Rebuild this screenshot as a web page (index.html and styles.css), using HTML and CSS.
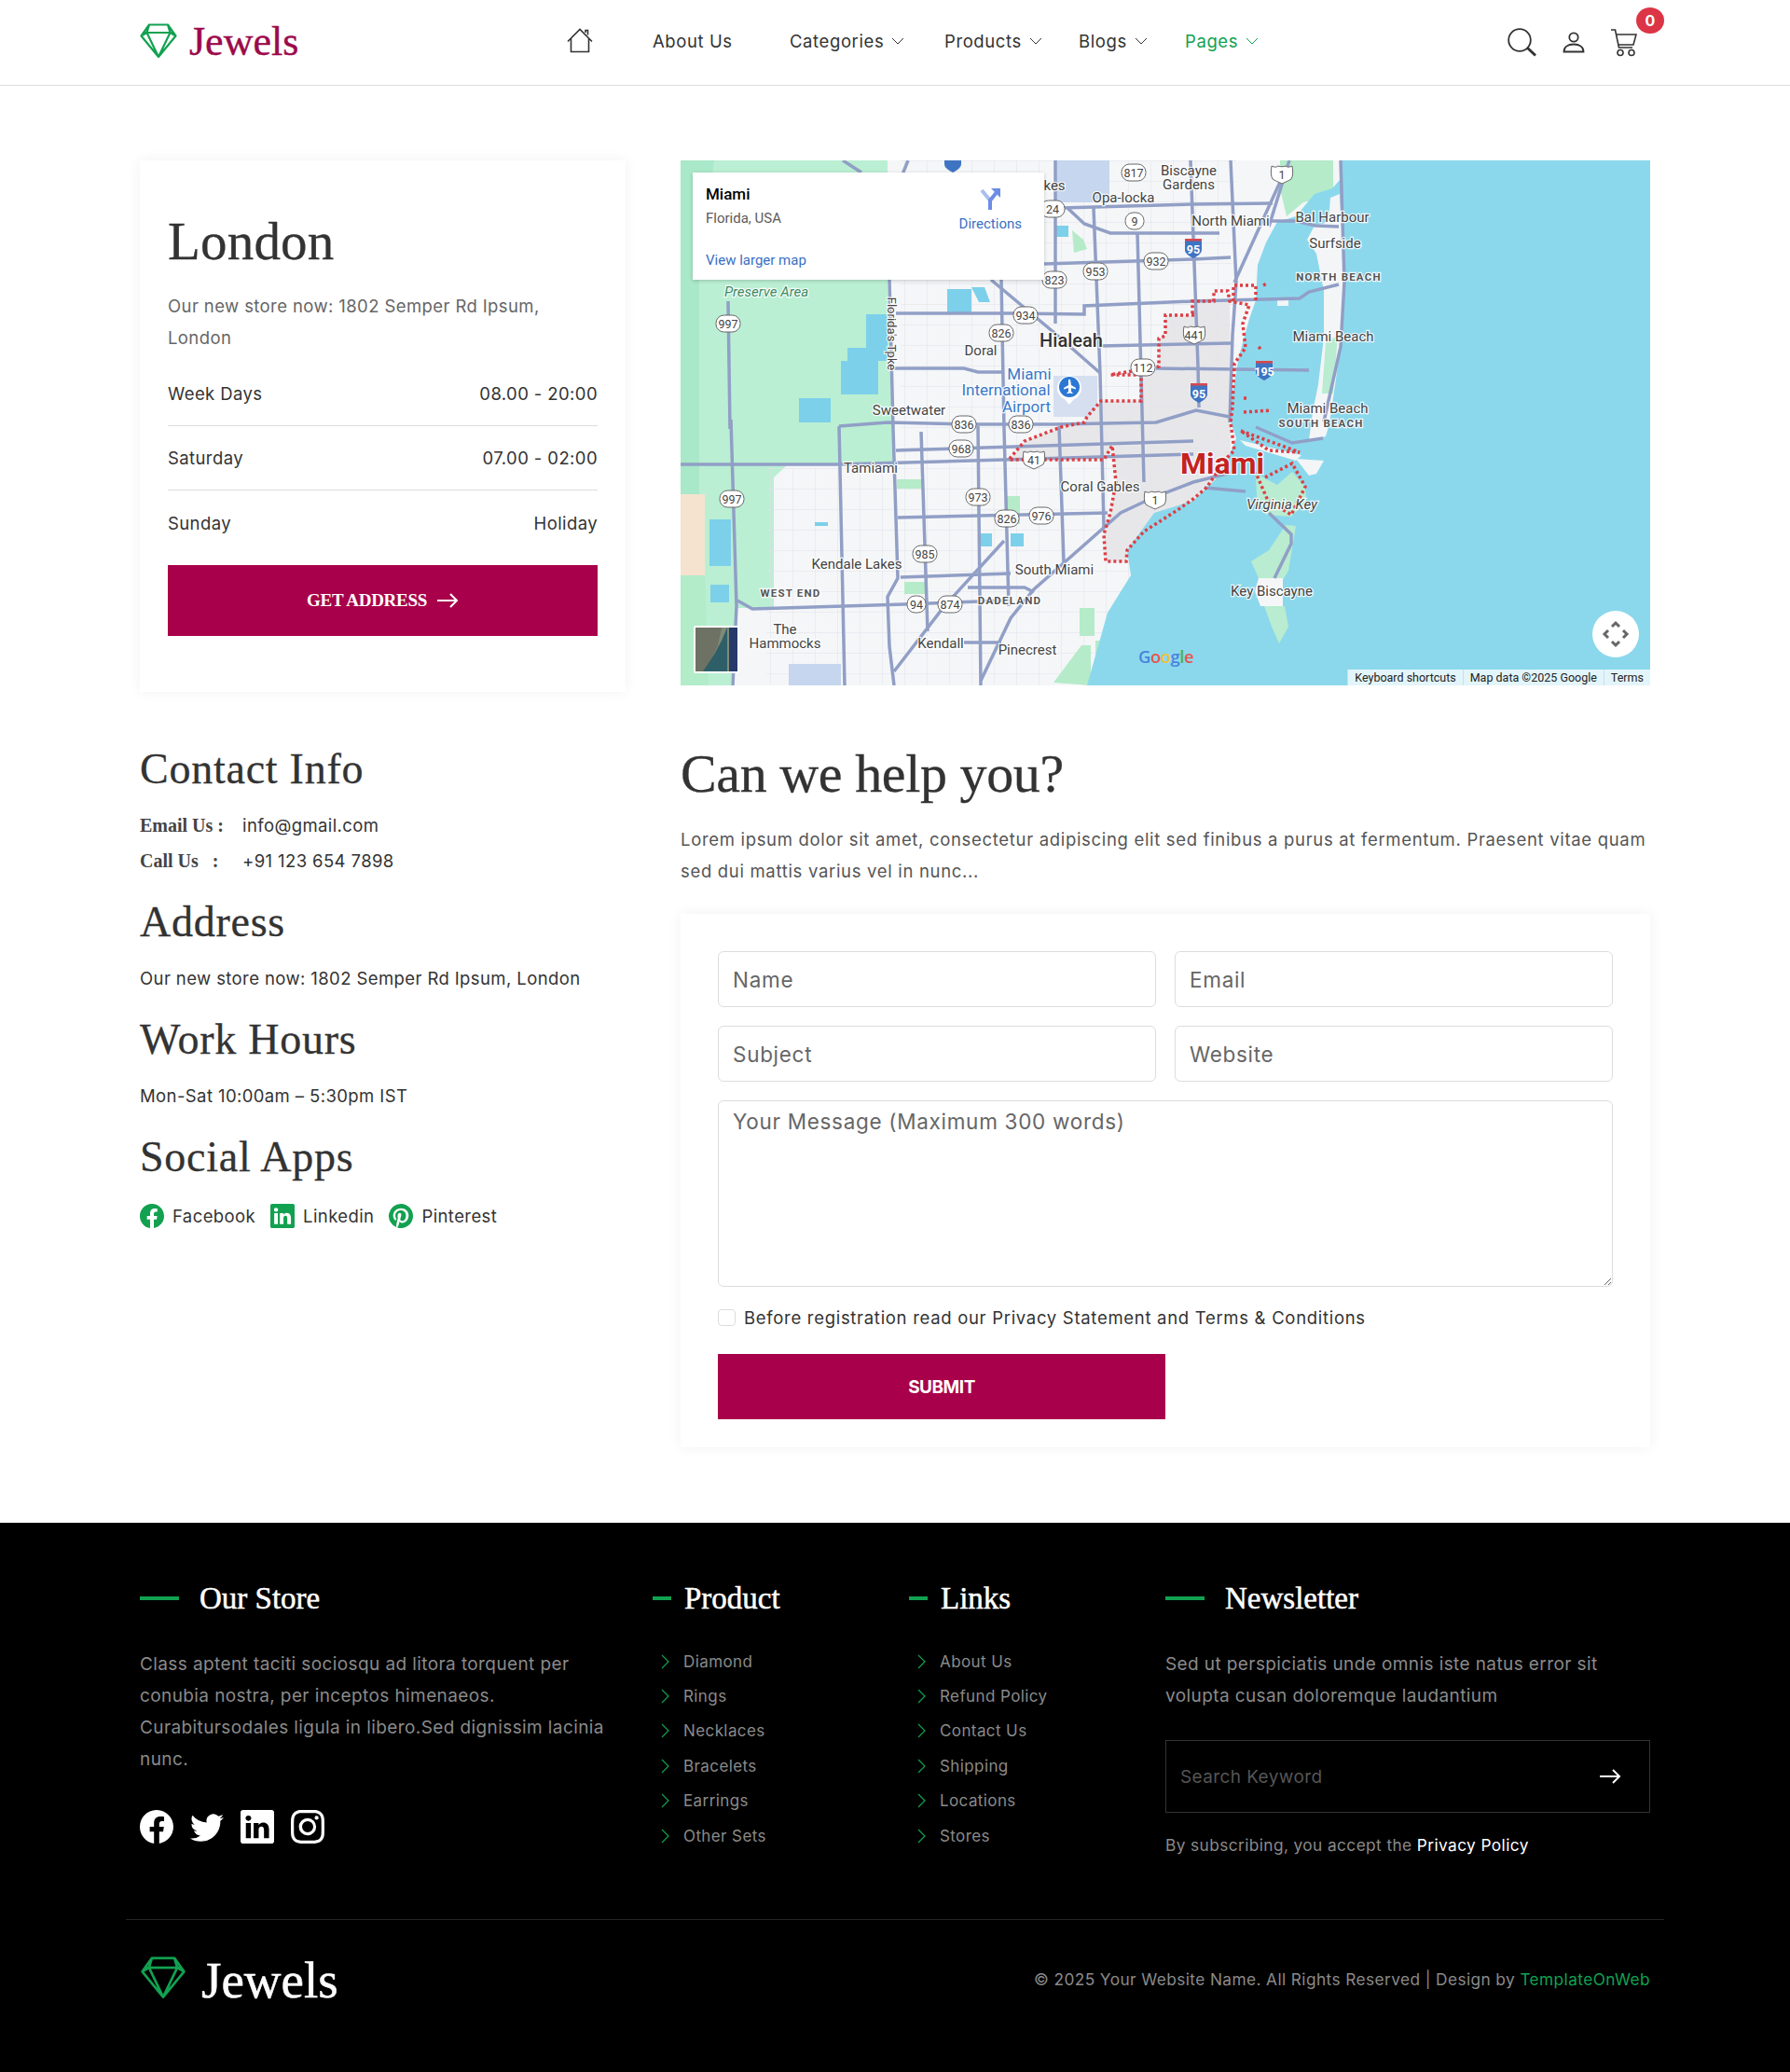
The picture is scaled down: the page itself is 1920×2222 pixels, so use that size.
FILE: index.html
```html
<!DOCTYPE html>
<html lang="en">
<head>
  <meta charset="UTF-8">
  <meta name="viewport" content="width=device-width, initial-scale=1">
  <title>Contact | Jewels</title>
  <link rel="stylesheet" href="styles.css">
</head>
<body>
  <!-- icon sprite -->
  <svg class="sprite" aria-hidden="true">
    <symbol id="gem" viewBox="0 0 40 38">
      <path d="M10 1.5h20l8.5 12L20 36 1.5 13.500zM4.500 10h31M10 1.500L7.500 10l12.500 26L32.500 10 30 1.500M7.500 10l-6 3.500M32.500 10l6 3.500" fill="none" stroke="currentColor" stroke-width="2.200" stroke-linejoin="round"/>
    </symbol>
    <symbol id="chev" viewBox="0 0 14 8"><path d="M1 1l6 6 6-6" fill="none" stroke="currentColor" stroke-width="1"/></symbol>
    <symbol id="chev-r" viewBox="0 0 9 16"><path d="M1 1l7 7-7 7" fill="none" stroke="currentColor" stroke-width="1.200"/></symbol>
    <symbol id="arrow" viewBox="0 0 24 16"><path d="M1 8h21M15 1l7 7-7 7" fill="none" stroke="currentColor" stroke-width="2"/></symbol>
    <symbol id="facebook" viewBox="0 0 16 16"><path fill="currentColor" d="M16 8.049c0-4.446-3.582-8.05-8-8.05C3.58 0-.002 3.603-.002 8.05c0 4.017 2.926 7.347 6.75 7.951v-5.625h-2.03V8.05H6.75V6.275c0-2.017 1.195-3.131 3.022-3.131.876 0 1.791.157 1.791.157v1.98h-1.009c-.993 0-1.303.621-1.303 1.258v1.51h2.218l-.354 2.326H9.25V16c3.824-.604 6.75-3.934 6.75-7.951z"/></symbol>
    <symbol id="twitter" viewBox="0 0 16 16"><path fill="currentColor" d="M5.026 15c6.038 0 9.341-5.003 9.341-9.334 0-.14 0-.282-.006-.422A6.685 6.685 0 0 0 16 3.542a6.658 6.658 0 0 1-1.889.518 3.301 3.301 0 0 0 1.447-1.817 6.533 6.533 0 0 1-2.087.793A3.286 3.286 0 0 0 7.875 6.030a9.325 9.325 0 0 1-6.767-3.429 3.289 3.289 0 0 0 1.018 4.382A3.323 3.323 0 0 1 .64 6.575v.045a3.288 3.288 0 0 0 2.632 3.218 3.203 3.203 0 0 1-.865.115 3.230 3.230 0 0 1-.614-.057 3.283 3.283 0 0 0 3.067 2.277A6.588 6.588 0 0 1 .78 13.580a6.320 6.320 0 0 1-.78-.045A9.344 9.344 0 0 0 5.026 15z"/></symbol>
    <symbol id="linkedin" viewBox="0 0 16 16"><path fill="currentColor" d="M0 1.146C0 .513.526 0 1.175 0h13.650C15.474 0 16 .513 16 1.146v13.708c0 .633-.526 1.146-1.175 1.146H1.175C.526 16 0 15.487 0 14.854V1.146zm4.943 12.248V6.169H2.542v7.225h2.401zm-1.200-8.212c.837 0 1.358-.554 1.358-1.248-.015-.709-.52-1.248-1.342-1.248-.822 0-1.359.54-1.359 1.248 0 .694.521 1.248 1.327 1.248h.016zm4.908 8.212V9.359c0-.216.016-.432.08-.586.173-.431.568-.878 1.232-.878.869 0 1.216.662 1.216 1.634v3.865h2.401V9.250c0-2.220-1.184-3.252-2.764-3.252-1.274 0-1.845.7-2.165 1.193v.025h-.016a5.540 5.540 0 0 1 .016-.025V6.169h-2.400c.03.678 0 7.225 0 7.225h2.400z"/></symbol>
    <symbol id="instagram" viewBox="0 0 16 16"><path fill="currentColor" d="M8 0C5.829 0 5.556.01 4.703.048 3.850.088 3.269.222 2.760.42a3.917 3.917 0 0 0-1.417.923A3.927 3.927 0 0 0 .42 2.760C.222 3.268.087 3.850.048 4.700.01 5.555 0 5.827 0 8.001c0 2.172.01 2.444.048 3.297.04.852.174 1.433.372 1.942.205.526.478.972.923 1.417.444.445.89.719 1.416.923.51.198 1.090.333 1.942.372C5.555 15.990 5.827 16 8 16s2.444-.01 3.298-.048c.851-.04 1.434-.174 1.943-.372a3.916 3.916 0 0 0 1.416-.923c.445-.445.718-.891.923-1.417.197-.509.332-1.090.372-1.942C15.990 10.445 16 10.173 16 8s-.01-2.445-.048-3.299c-.04-.851-.175-1.433-.372-1.941a3.926 3.926 0 0 0-.923-1.417A3.911 3.911 0 0 0 13.240.42c-.51-.198-1.092-.333-1.943-.372C10.443.01 10.172 0 7.998 0h.003zm-.717 1.442h.718c2.136 0 2.389.007 3.232.046.78.035 1.204.166 1.486.275.373.145.64.319.92.599.28.28.453.546.598.92.11.281.24.705.275 1.485.039.843.047 1.096.047 3.231s-.008 2.389-.047 3.232c-.035.78-.166 1.203-.275 1.485a2.470 2.470 0 0 1-.599.919c-.28.28-.546.453-.92.598-.28.11-.704.24-1.485.276-.843.038-1.096.047-3.232.047s-2.390-.009-3.233-.047c-.78-.036-1.203-.166-1.485-.276a2.478 2.478 0 0 1-.92-.598 2.480 2.480 0 0 1-.6-.92c-.109-.281-.24-.705-.275-1.485-.038-.843-.046-1.096-.046-3.233 0-2.136.008-2.388.046-3.231.036-.78.166-1.204.276-1.486.145-.373.319-.64.599-.92.28-.28.546-.453.92-.598.282-.11.705-.24 1.485-.276.738-.034 1.024-.044 2.515-.045v.002zm4.988 1.328a.96.96 0 1 0 0 1.920.96.96 0 0 0 0-1.920zm-4.270 1.122a4.109 4.109 0 1 0 0 8.217 4.109 4.109 0 0 0 0-8.217zm0 1.441a2.667 2.667 0 1 1 0 5.334 2.667 2.667 0 0 1 0-5.334z"/></symbol>
    <symbol id="pinterest" viewBox="0 0 16 16"><path fill="currentColor" d="M8 0a8 8 0 0 0-2.915 15.452c-.07-.633-.134-1.606.027-2.297.146-.625.938-3.977.938-3.977s-.239-.479-.239-1.187c0-1.113.645-1.943 1.448-1.943.682 0 1.012.512 1.012 1.127 0 .686-.437 1.712-.663 2.663-.188.796.4 1.446 1.185 1.446 1.422 0 2.515-1.500 2.515-3.664 0-1.915-1.377-3.254-3.342-3.254-2.276 0-3.612 1.707-3.612 3.471 0 .688.265 1.425.595 1.826a.24.24 0 0 1 .056.23c-.061.252-.196.796-.222.907-.035.146-.116.177-.268.107-1-.465-1.624-1.926-1.624-3.100 0-2.523 1.834-4.840 5.286-4.840 2.775 0 4.932 1.977 4.932 4.620 0 2.757-1.739 4.976-4.151 4.976-.811 0-1.573-.421-1.834-.919l-.498 1.902c-.181.695-.669 1.566-.995 2.097A8 8 0 1 0 8 0z"/></symbol>
  </svg>

  <header class="header">
    <div class="container header-row">
      <a class="logo" href="#">
        <svg class="logo-gem"><use href="#gem"/></svg>
        <span>Jewels</span>
      </a>
      <nav class="nav">
        <a class="nav-home" href="#" aria-label="Home">
          <svg viewBox="0 0 28 27" width="28" height="27"><path d="M1 14.500L14 1.500l13 13M4.500 11v14.500h19V11M20 5V2.500h2.500v5" fill="none" stroke="#333" stroke-width="1.600"/></svg>
        </a>
        <a class="nav-link" href="#">About Us</a>
        <a class="nav-link" href="#">Categories <svg class="chev"><use href="#chev"/></svg></a>
        <a class="nav-link" href="#">Products <svg class="chev"><use href="#chev"/></svg></a>
        <a class="nav-link" href="#">Blogs <svg class="chev"><use href="#chev"/></svg></a>
        <a class="nav-link nav-active" href="#">Pages <svg class="chev"><use href="#chev"/></svg></a>
      </nav>
      <div class="header-icons">
        <svg viewBox="0 0 32 31" width="32" height="31"><circle cx="13" cy="13" r="11.800" fill="none" stroke="#333" stroke-width="1.800"/><path d="M21.500 21.500L30 29.500" stroke="#333" stroke-width="3"/></svg>
        <svg viewBox="0 0 24 23" width="24" height="23"><circle cx="12" cy="6" r="4.700" fill="none" stroke="#333" stroke-width="1.800"/><path d="M1.500 21.500c0-5 4-8 10.500-8s10.500 3 10.500 8z" fill="none" stroke="#333" stroke-width="1.800"/></svg>
        <a class="cart" href="#">
          <svg viewBox="0 0 29 30" width="29" height="30"><path d="M1 1h4.500l4 19h14.500M6.500 6H28l-3 11H9" fill="none" stroke="#333" stroke-width="1.600"/><circle cx="11" cy="25.500" r="3" fill="none" stroke="#333" stroke-width="1.600"/><circle cx="23" cy="25.500" r="3" fill="none" stroke="#333" stroke-width="1.600"/></svg>
          <span class="cart-badge">0</span>
        </a>
      </div>
    </div>
  </header>

  <main class="container main">
    <section class="top-grid">
      <div class="card store-card">
        <h2>London</h2>
        <p class="store-addr">Our new store now: 1802 Semper Rd Ipsum, London</p>
        <ul class="hours">
          <li><span>Week Days</span><span>08.00 - 20:00</span></li>
          <li><span>Saturday</span><span>07.00 - 02:00</span></li>
          <li><span>Sunday</span><span>Holiday</span></li>
        </ul>
        <a class="btn btn-address" href="#">GET ADDRESS <svg class="btn-arrow"><use href="#arrow"/></svg></a>
      </div>

      <div class="map">
        <svg class="map-svg" viewBox="0 0 1040 563">
          <defs>
            <rect id="sh" x="-13" y="-9" width="26" height="18" rx="8.500" class="sh"/>
            <rect id="sh2" x="-10" y="-9" width="20" height="18" rx="8.500" class="sh"/>
            <path id="us" class="sh" d="M-11-9c3 1.500 5 1.500 7 0 3 1 5 1 8 0 2 1.500 4 1.500 7 0 1 5 1 11-1 14-3 2-6 3-10 5-4-2-7-3-10-5-2-3-2-9-1-14z"/>
            <g id="ih"><path d="M-9-8h18v10c0 4-5 7-9 9-4-2-9-5-9-9z" fill="#3f74c2"/><path d="M-9-10h18v2.500h-18z" fill="#d9484e"/></g>
            <pattern id="grid" width="24" height="22" patternUnits="userSpaceOnUse"><path d="M0 0h24M0 0v22" stroke="#dfe2ea" stroke-width="1"/></pattern>
          </defs>

          <rect width="1040" height="563" fill="#f5f6f8"/>
          <!-- everglades -->
          <path fill="#baefd3" d="M0 0H222V128L228 326H115L100 340V480L60 480 54 563H0z"/>
          <path fill="#a9e8c8" d="M0 0H36L20 120V358H0z"/>
          <path fill="#f5e3cf" d="M0 358H26L26 445H0z"/>
          <path fill="#b2ecc9" d="M0 445H26L30 563H0z"/>
          <!-- minor street grid -->
          <rect x="236" y="0" width="360" height="563" fill="url(#grid)"/>
          <rect x="92" y="330" width="144" height="233" fill="url(#grid)"/>
          <path fill="#c5d6ee" d="M116 540H172V563H116z"/>
          <path fill="#c5d6ee" d="M402 0H460V45H402z"/>
          <path fill="#d5dff0" d="M400 231H447V275H400z"/>
          <!-- lakes -->
          <g fill="#7dd0ea">
            <path d="M286 138H312V163H286zM312 136h14l6 16h-12zM199 165h23v36h-23zM179 201h43v14h-43zM172 215h40v36h-40zM127 255h34v26h-34zM31 385H54V435H31zM32 455H52V474H32zM144 388h14v4h-14zM322 400h12v14h-12zM354 400h14v14h-14zM402 70h14v12h-14z"/>
          </g>
          <!-- parks -->
          <g fill="#b5ebc9">
            <path d="M643 0H700V38L668 45 650 60 643 30zM232 342H258V352H232zM240 452H262V465H240zM428 480h16v30h-16zM400 560l30-40h10v43zM445 515h12v30h-12zM350 360h14v30h-14zM420 75l12 10 4 10-14 4z"/>
          </g>
          <!-- urban grey -->
          <path fill="#e7e7ea" d="M551 151L549 166H520V188L513 191V221L461 230H494V258H451L433 281 408 286 369 301 352 321H454L463 306 467 345 461 378 454 401 456 430H478L497 398 533 375 590 340 589 151z"/>
          <rect x="450" y="150" width="145" height="210" fill="url(#grid)" opacity=".6"/>

          <!-- water -->
          <path fill="#8bd8ec" d="M708 0H1040V563H436L458 485 483 445 479 418 508 378 550 365 574 342 587 320 596 298 590 280 592 250 599 210 610 170 617 150 619 112 628 88 640 66 660 60 680 36 699 30 708 20z"/>
          <!-- barrier islands -->
          <path fill="#f3f5f7" d="M697 40L707 36 712 130 708 200 696 282 692 296 674 300 678 270 684 240 690 190 690 140 682 100 672 85 680 70 695 66z"/>
          <path fill="#b9ecd0" d="M692 195L705 188 700 250 688 250z"/>
          <path fill="#f3f5f7" d="M660 320L690 322 682 336 674 338zM640 150h12v6h-12zM600 300L666 316 660 322 606 306z"/>
          <path fill="#b9ecd0" d="M617 336L640 348 656 334 670 350 671 366 655 382 628 380 618 360zM649 391L660 392 652 440 646 450 620 448 612 430 631 418zM626 478H648L652 500 642 518 634 500z"/>
          <path fill="#f5f6f8" d="M620 448H646V478H622L616 462z"/>

          <!-- main roads -->
          <g class="road">
            <path d="M51 151L53 288 54 278 60 478 56 563"/>
            <path d="M170 285L176 563"/>
            <path d="M224 128L228 288 233 448 222 468 224 521 229 563"/>
            <path d="M258 291L265 505"/>
            <path d="M319 285L322 563"/>
            <path d="M344 128L347 288 352 478"/>
            <path d="M402 0V175"/>
            <path d="M406 285L411 431"/>
            <path d="M443 51L450 228 454 393"/>
            <path d="M490 78L497 345"/>
            <path d="M547 0L555 221 556 265"/>
            <path d="M590 0L596 131 592 188 589 281"/>
            <path d="M644 21L594 131"/>
            <path d="M653 0L631 71"/>
            <path d="M174 0L194 13M244 0L236 20"/>
            <path d="M333 128L401 185 450 228"/>
            <path d="M408 51L550 47 635 46"/>
            <path d="M390 111L550 106 590 104"/>
            <path d="M415 51L433 68 461 78H578"/>
            <path d="M231 164H358L433 165V156L550 151"/>
            <path d="M229 223H304L319 227H347"/>
            <path d="M450 199L592 196"/>
            <path d="M170 285L222 281 304 283H400L510 281 553 268 589 275"/>
            <path d="M510 223L674 225"/>
            <path d="M549 151L664 148 674 141 706 133"/>
            <path d="M631 65H660L681 70 706 71"/>
            <path d="M0 326H169L347 321 550 315"/>
            <path d="M231 311L550 301"/>
            <path d="M233 383L458 378"/>
            <path d="M229 548L283 478 347 408"/>
            <path d="M322 558L354 491 379 460 472 378 508 361 550 345 590 335"/>
            <path d="M236 447L354 443"/>
            <path d="M308 458H369L379 463"/>
            <path d="M61 472L77 481 240 476 347 472"/>
            <path d="M304 517H344"/>
            <path d="M631 378L655 401V411L637 448"/>
            <path d="M562 351L606 355"/>
            <path d="M617 286L656 303 689 298"/>
            <path d="M708 0L712 130 708 200 690 280"/>
          </g>

          <!-- city boundary -->
          <g class="boundary">
            <path d="M551 166H520V188L513 191V221L461 230H494V258H451L436 275 433 281 408 286 369 301 352 321H454L463 306 467 345 461 378 454 401 456 430H478L479 418 497 398 533 375 550 363 564 351 587 318 594 311 590 281 592 265 594 218 606 201 603 175 610 155 589 151 587 140H572V151H549V166"/>
            <path d="M593 151V134H617V151M601 290L664 313 631 311 601 290M627 340L656 325 670 350 655 380 630 365 617 335"/>
            <path d="M625 134l4-2M620 200l4 4M618 220l2-2M604 255h3M604 270l30-2"/>
          </g>

          <!-- labels -->
          <g class="lbl">
            <text class="lbl-park" x="92" y="141">Preserve Area</text>
            <text class="lbl-sm" transform="translate(226 186) rotate(90)">Florida's Tpke</text>
            <text x="322" y="204">Doral</text>
            <text class="lbl-bold" x="419" y="193">Hialeah</text>
            <text x="475" y="40">Opa-locka</text>
            <text x="401" y="27">kes</text>
            <text x="545" y="11">Biscayne</text>
            <text x="545" y="26">Gardens</text>
            <text x="590" y="65">North Miami</text>
            <text x="699" y="61">Bal Harbour</text>
            <text x="702" y="89">Surfside</text>
            <text class="lbl-area" x="706" y="125">NORTH BEACH</text>
            <text x="700" y="189">Miami Beach</text>
            <text x="694" y="266">Miami Beach</text>
            <text class="lbl-area" x="687" y="282">SOUTH BEACH</text>
            <text class="lbl-air" x="374" y="229">Miami</text>
            <text class="lbl-air" x="349" y="246">International</text>
            <text class="lbl-air" x="371" y="264">Airport</text>
            <text x="245" y="268">Sweetwater</text>
            <text x="204" y="330">Tamiami</text>
            <text x="450" y="350">Coral Gables</text>
            <text x="189" y="433">Kendale Lakes</text>
            <text x="401" y="439">South Miami</text>
            <text class="lbl-area" x="118" y="464">WEST END</text>
            <text class="lbl-area" x="353" y="472">DADELAND</text>
            <text x="112" y="503">The</text>
            <text x="112" y="518">Hammocks</text>
            <text x="279" y="518">Kendall</text>
            <text x="372" y="525">Pinecrest</text>
            <text class="lbl-city" x="581" y="325">Miami</text>
            <text class="lbl-it" x="645" y="369">Virginia Key</text>
            <text x="634" y="462">Key Biscayne</text>
          </g>

          <!-- airport pin -->
          <circle cx="417" cy="244" r="13" fill="#fff"/>
          <path d="M412 256l5 6 5-6z" fill="#fff"/>
          <circle cx="417" cy="243" r="11" fill="#2b78d4"/>
          <path d="M416 235h2l1 6 5 3v1.500l-5-1.500v4l1.500 1.200v1l-3-.7-3 .7v-1l1.500-1.200v-4l-5 1.500V244l5-3z" fill="#fff"/>

          <!-- route shields -->
          <g>
            <use href="#sh" x="51" y="175"/><use href="#sh" x="370" y="166"/><use href="#sh" x="344" y="185"/><use href="#sh" x="401" y="128"/><use href="#sh" x="445" y="119"/><use href="#sh" x="510" y="108"/><use href="#sh" x="486" y="13"/><use href="#sh2" x="487" y="65"/><use href="#sh" x="399" y="52"/><use href="#sh" x="496" y="222"/><use href="#sh" x="304" y="283"/><use href="#sh" x="365" y="283"/><use href="#sh" x="301" y="309"/><use href="#sh" x="55" y="363"/><use href="#sh" x="319" y="361"/><use href="#sh" x="350" y="384"/><use href="#sh" x="387" y="381"/><use href="#sh" x="262" y="422"/><use href="#sh2" x="253" y="476"/><use href="#sh" x="289" y="476"/>
            <use href="#us" x="645" y="15"/><use href="#us" x="551" y="187"/><use href="#us" x="379" y="321"/><use href="#us" x="509" y="364"/>
            <use href="#ih" x="550" y="94"/><use href="#ih" x="626" y="225"/><use href="#ih" x="556" y="249"/><use href="#ih" x="292" y="2"/>
          </g>
          <g class="rtn">
            <text x="51" y="175">997</text><text x="370" y="166">934</text><text x="344" y="185">826</text><text x="401" y="128">823</text><text x="445" y="119">953</text><text x="510" y="108">932</text><text x="486" y="13">817</text><text x="487" y="65">9</text><text x="399" y="52">24</text><text x="496" y="222">112</text><text x="304" y="283">836</text><text x="365" y="283">836</text><text x="301" y="309">968</text><text x="55" y="363">997</text><text x="319" y="361">973</text><text x="350" y="384">826</text><text x="387" y="381">976</text><text x="262" y="422">985</text><text x="253" y="476">94</text><text x="289" y="476">874</text>
            <text x="645" y="15">1</text><text x="551" y="187">441</text><text x="379" y="321">41</text><text x="509" y="364">1</text>
          </g>
          <g class="rtn rtn-i">
            <text x="550" y="95">95</text><text x="626" y="226">195</text><text x="556" y="250">95</text>
          </g>

          <!-- satellite tile -->
          <rect x="14" y="499" width="49" height="51" rx="2" fill="#fff"/>
          <rect x="16" y="501" width="45" height="47" fill="#7f8a78"/>
          <path d="M16 501H44L40 520 28 548H16z" fill="#6d7264"/>
          <path d="M24 548L36 530 44 515 50 501V548z" fill="#2e5f68"/>
          <rect x="52" y="501" width="9" height="47" fill="#27386a"/>

          <text class="map-google" x="491" y="539"><tspan fill="#4a84e0">G</tspan><tspan fill="#e3584d">o</tspan><tspan fill="#f0c23c">o</tspan><tspan fill="#4a84e0">g</tspan><tspan fill="#4caf5b">l</tspan><tspan fill="#e3584d">e</tspan></text>
        </svg>

        <div class="map-pop">
          <div class="map-pop-head">
            <div>
              <strong>Miami</strong>
              <span>Florida, USA</span>
            </div>
            <a class="map-dir" href="#">
              <svg viewBox="0 0 24 24" width="24" height="24"><path d="M12 24V14L3 3" fill="none" stroke="#a9bdf0" stroke-width="4"/><path d="M12 24V14L20 4" fill="none" stroke="#6c8de6" stroke-width="4"/><path d="M13 1h10v10z" fill="#6c8de6"/></svg>
              Directions
            </a>
          </div>
          <a class="map-larger" href="#">View larger map</a>
        </div>
        <button class="map-full" aria-label="Fullscreen">
          <svg viewBox="0 0 30 30" width="30" height="30"><path d="M11 7l4-4 4 4M11 23l4 4 4-4M7 11l-4 4 4 4M23 11l4 4-4 4" fill="none" stroke="#666" stroke-width="3"/></svg>
        </button>
        <div class="map-attr">
          <span>Keyboard shortcuts</span><span>Map data ©2025 Google</span><span>Terms</span>
        </div>
      </div>
    </section>

    <section class="bottom-grid">
      <div class="contact-info">
        <h3>Contact Info</h3>
        <p class="info-line"><b>Email Us :</b> info@gmail.com</p>
        <p class="info-line"><b>Call Us &nbsp; :</b> +91 123 654 7898</p>
        <h3>Address</h3>
        <p>Our new store now: 1802 Semper Rd Ipsum, London</p>
        <h3>Work Hours</h3>
        <p>Mon-Sat 10:00am – 5:30pm IST</p>
        <h3>Social Apps</h3>
        <div class="social">
          <a href="#"><svg><use href="#facebook"/></svg>Facebook</a>
          <a href="#"><svg><use href="#linkedin"/></svg>Linkedin</a>
          <a href="#"><svg><use href="#pinterest"/></svg>Pinterest</a>
        </div>
      </div>

      <div class="help">
        <h2>Can we help you?</h2>
        <p class="help-text">Lorem ipsum dolor sit amet, consectetur adipiscing elit sed finibus a purus at fermentum. Praesent vitae quam sed dui mattis varius vel in nunc...</p>
        <form class="card help-form">
          <div class="form-row">
            <input type="text" placeholder="Name">
            <input type="email" placeholder="Email">
          </div>
          <div class="form-row">
            <input type="text" placeholder="Subject">
            <input type="text" placeholder="Website">
          </div>
          <textarea placeholder="Your Message (Maximum 300 words)"></textarea>
          <label class="agree"><input type="checkbox"> Before registration read our Privacy Statement and Terms &amp; Conditions</label>
          <button type="button" class="btn btn-submit">SUBMIT</button>
        </form>
      </div>
    </section>
  </main>

  <footer class="footer">
    <div class="container">
      <div class="footer-grid">
        <div>
          <h4 class="f-title"><i class="f-dash"></i>Our Store</h4>
          <p class="f-text">Class aptent taciti sociosqu ad litora torquent per conubia nostra, per inceptos himenaeos. Curabitursodales ligula in libero.Sed dignissim lacinia nunc.</p>
          <div class="f-social">
            <svg><use href="#facebook"/></svg>
            <svg><use href="#twitter"/></svg>
            <svg><use href="#linkedin"/></svg>
            <svg><use href="#instagram"/></svg>
          </div>
        </div>
        <div>
          <h4 class="f-title f-title-short"><i class="f-dash"></i>Product</h4>
          <ul class="f-links">
            <li><svg><use href="#chev-r"/></svg>Diamond</li>
            <li><svg><use href="#chev-r"/></svg>Rings</li>
            <li><svg><use href="#chev-r"/></svg>Necklaces</li>
            <li><svg><use href="#chev-r"/></svg>Bracelets</li>
            <li><svg><use href="#chev-r"/></svg>Earrings</li>
            <li><svg><use href="#chev-r"/></svg>Other Sets</li>
          </ul>
        </div>
        <div>
          <h4 class="f-title f-title-short"><i class="f-dash"></i>Links</h4>
          <ul class="f-links">
            <li><svg><use href="#chev-r"/></svg>About Us</li>
            <li><svg><use href="#chev-r"/></svg>Refund Policy</li>
            <li><svg><use href="#chev-r"/></svg>Contact Us</li>
            <li><svg><use href="#chev-r"/></svg>Shipping</li>
            <li><svg><use href="#chev-r"/></svg>Locations</li>
            <li><svg><use href="#chev-r"/></svg>Stores</li>
          </ul>
        </div>
        <div>
          <h4 class="f-title"><i class="f-dash"></i>Newsletter</h4>
          <p class="f-text">Sed ut perspiciatis unde omnis iste natus error sit volupta cusan doloremque laudantium</p>
          <div class="f-search">
            <input type="text" placeholder="Search Keyword">
            <svg><use href="#arrow"/></svg>
          </div>
          <p class="f-note">By subscribing, you accept the <a href="#">Privacy Policy</a></p>
        </div>
      </div>
      <div class="footer-bottom">
        <a class="f-logo" href="#">
          <svg class="f-gem"><use href="#gem"/></svg>
          <span>Jewels</span>
        </a>
        <p>© 2025 Your Website Name. All Rights Reserved | Design by <a href="#">TemplateOnWeb</a></p>
      </div>
    </div>
  </footer>
</body>
</html>
```

FILE: styles.css
```css
:root {
  --wine: #a8004a;
  --green: #12a150;
  --text: #333;
  --muted: #666;
  --body-font: 'Inter', sans-serif;
  --head-font: 'Liberation Serif', serif;
}

* {
  box-sizing: border-box;
  margin: 0;
  padding: 0;
}

body {
  font-family: var(--body-font);
  font-size: 18.5px;
  letter-spacing: 0.4px;
  color: var(--text);
  background: #fff;
}

a {
  color: inherit;
  text-decoration: none;
}

ul {
  list-style: none;
}

.sprite {
  display: none;
}

.container {
  width: 1620px;
  margin: 0 auto;
}

/* header */
.header {
  height: 92px;
  border-bottom: 1px solid #ddd;
}

.header-row {
  height: 91px;
  display: flex;
  align-items: center;
}

.logo {
  width: 458px;
  display: flex;
  align-items: center;
  gap: 13px;
  margin-top: -2px;
  font-family: var(--head-font);
  font-size: 44px;
  letter-spacing: 0;
  color: #9c0a4c;
  -webkit-text-stroke: 0.4px #9c0a4c;
}

.logo-gem {
  width: 40px;
  height: 38px;
  color: var(--green);
  margin-top: -2px;
}

.nav {
  display: grid;
  grid-template-columns: 92px 147px 166px 144px 114px auto;
  align-items: center;
  margin-top: -4px;
  letter-spacing: 0.6px;
}

.nav-home {
  display: flex;
}

.nav-link {
  display: flex;
  align-items: center;
  gap: 8px;
}

.nav-active {
  color: var(--green);
}

.chev {
  width: 14px;
  height: 8px;
}

.header-icons {
  margin-left: auto;
  margin-right: 14px;
  display: flex;
  align-items: center;
  gap: 27px;
}

.cart {
  position: relative;
  display: flex;
}

.cart-badge {
  position: absolute;
  top: -23px;
  left: 28px;
  width: 30px;
  height: 28px;
  border-radius: 50%;
  background: #dc3545;
  color: #fff;
  font-size: 16px;
  font-weight: 700;
  letter-spacing: 0;
  display: flex;
  align-items: center;
  justify-content: center;
}

/* main */
.main {
  padding-top: 80px;
  padding-bottom: 81px;
}

.top-grid,
.bottom-grid {
  display: grid;
  grid-template-columns: 521px 1040px;
  column-gap: 59px;
  align-items: start;
}

.card {
  background: #fff;
  box-shadow: 0 0 14px rgba(0, 0, 0, 0.06);
}

.store-card {
  height: 570px;
  padding: 30px;
}

.store-card h2 {
  font-family: var(--head-font);
  font-size: 57px;
  font-weight: 400;
  line-height: 60px;
  letter-spacing: 0.2px;
  margin: 27px 0 22px;
  -webkit-text-stroke: 0.3px #333;
}

.store-addr {
  line-height: 34px;
  color: var(--muted);
  margin-bottom: 9px;
}

.hours li {
  height: 69px;
  display: flex;
  justify-content: space-between;
  align-items: center;
  border-bottom: 1px solid #ddd;
}

.hours li:last-child {
  border-bottom: none;
}

.btn {
  display: flex;
  align-items: center;
  justify-content: center;
  background: var(--wine);
  color: #fff;
  border: none;
}

.btn-address {
  height: 76px;
  margin-top: 11px;
  gap: 10px;
  font-family: var(--head-font);
  font-size: 19px;
  font-weight: 700;
  letter-spacing: -0.3px;
}

.btn-arrow {
  width: 24px;
  height: 16px;
}

/* map */
.map {
  position: relative;
  height: 563px;
  overflow: hidden;
}

.map-svg {
  display: block;
  width: 100%;
  height: 100%;
}

.road path {
  fill: none;
  stroke: #919fc6;
  stroke-width: 3.500;
}

.boundary path {
  fill: none;
  stroke: #dc3f45;
  stroke-width: 3.500;
  stroke-dasharray: 3 3;
}

.lbl text {
  font-family: 'Roboto', sans-serif;
  font-size: 15px;
  letter-spacing: 0;
  fill: #444;
  text-anchor: middle;
  dominant-baseline: central;
  paint-order: stroke;
  stroke: rgba(255, 255, 255, 0.85);
  stroke-width: 2.500px;
}

.lbl .lbl-bold {
  font-size: 20px;
  font-weight: 500;
  fill: #333;
}

.lbl .lbl-sm {
  font-size: 13px;
}

.lbl .lbl-park {
  font-style: italic;
  fill: #3c8a64;
}

.lbl .lbl-area {
  font-size: 11.500px;
  font-weight: 700;
  letter-spacing: 1.200px;
  fill: #555;
}

.lbl .lbl-air {
  font-size: 17px;
  fill: #3a78c9;
}

.lbl .lbl-city {
  font-size: 32px;
  font-weight: 700;
  fill: #c5221f;
}

.lbl .lbl-it {
  font-style: italic;
}

.sh {
  fill: #fff;
  stroke: #666;
  stroke-width: 1;
}

.rtn text {
  font-family: 'Roboto', sans-serif;
  font-size: 12.500px;
  letter-spacing: 0;
  fill: #444;
  text-anchor: middle;
  dominant-baseline: central;
}

.rtn-i text {
  font-weight: 700;
  fill: #fff;
}

.map-google {
  font-family: 'Open Sans', sans-serif;
  font-size: 18.500px;
  font-weight: 600;
  letter-spacing: -0.5px;
}

.map-pop {
  position: absolute;
  left: 13px;
  top: 13px;
  width: 377px;
  height: 115px;
  padding: 12px 24px 0 14px;
  background: #fff;
  font-family: 'Roboto', sans-serif;
  letter-spacing: 0;
  box-shadow: 0 1px 4px rgba(0, 0, 0, 0.2);
}

.map-pop-head {
  display: flex;
  justify-content: space-between;
  height: 70px;
}

.map-pop strong {
  display: block;
  font-size: 17px;
  font-weight: 500;
  line-height: 22px;
  color: #000;
}

.map-pop span {
  display: block;
  font-size: 15px;
  line-height: 30px;
  color: #5b5b5b;
}

.map-dir,
.map-larger {
  font-size: 15px;
  color: #3a6fc4;
}

.map-dir {
  display: flex;
  flex-direction: column;
  align-items: center;
  line-height: 22px;
  gap: 4px;
  margin-top: 4px;
}

.map-larger {
  display: block;
  margin-top: 3px;
}

.map-full {
  position: absolute;
  left: 978px;
  top: 483px;
  width: 50px;
  height: 50px;
  border: none;
  border-radius: 50%;
  background: #fff;
  display: flex;
  align-items: center;
  justify-content: center;
}

.map-attr {
  position: absolute;
  right: 0;
  bottom: 0;
  height: 17px;
  display: flex;
  background: rgba(255, 255, 255, 0.75);
  font-family: 'Roboto', sans-serif;
  font-size: 12.500px;
  line-height: 17px;
  letter-spacing: 0;
  color: #222;
}

.map-attr span {
  padding: 0 7px;
  border-left: 1px solid #cfdde4;
}

/* contact column */
.bottom-grid {
  margin-top: 58px;
}

.contact-info h3 {
  font-family: var(--head-font);
  font-size: 46px;
  font-weight: 400;
  line-height: 50px;
  letter-spacing: 0.750px;
  margin: 24px 0 18px;
  -webkit-text-stroke: 0.3px #333;
}

.contact-info h3:first-child {
  margin-top: 0;
}

.contact-info p {
  line-height: 34px;
}

.info-line {
  display: flex;
  margin-bottom: 4px;
}

.info-line b {
  width: 110px;
  font-family: var(--head-font);
  font-size: 20px;
  font-weight: 700;
  letter-spacing: 0;
  color: #444;
}

.social {
  display: flex;
  gap: 16px;
  margin-top: 25px;
}

.social a {
  display: flex;
  align-items: center;
  gap: 9px;
}

.social svg {
  width: 26px;
  height: 26px;
  color: var(--green);
}

/* form column */
.help h2 {
  font-family: var(--head-font);
  font-size: 58px;
  font-weight: 400;
  line-height: 60px;
  letter-spacing: -0.4px;
  margin-bottom: 23px;
  -webkit-text-stroke: 0.3px #333;
}

.help-text {
  line-height: 34px;
  letter-spacing: 0.68px;
  color: #555;
  margin-bottom: 29px;
}

.help-form {
  height: 572px;
  padding: 40px;
}

.form-row {
  display: grid;
  grid-template-columns: 1fr 1fr;
  gap: 20px;
  margin-bottom: 20px;
}

.help-form input[type="text"],
.help-form input[type="email"],
.help-form textarea {
  width: 100%;
  height: 60px;
  padding: 0 15px;
  border: 1px solid #ddd;
  border-radius: 6px;
  font-family: var(--body-font);
  font-size: 22.500px;
  letter-spacing: 0.7px;
  outline: none;
}

.help-form textarea {
  display: block;
  height: 200px;
  padding-top: 8px;
}

::placeholder {
  color: #666;
  opacity: 1;
}

.agree {
  display: flex;
  align-items: center;
  gap: 9px;
  height: 24px;
  margin-top: 21px;
  letter-spacing: 0.7px;
}

.agree input {
  appearance: none;
  width: 19px;
  height: 18px;
  border: 1px solid #ddd;
  border-radius: 4px;
}

.btn-submit {
  width: 480px;
  height: 70px;
  margin-top: 27px;
  font-family: var(--body-font);
  font-size: 19px;
  font-weight: 700;
  letter-spacing: -0.5px;
}

/* footer */
.footer {
  background: #000;
  height: 590px;
  padding-top: 58px;
  color: #8a8a8a;
}

.footer-grid {
  display: grid;
  grid-template-columns: 550px 275px 275px 520px;
  height: 367px;
}

.f-title {
  display: flex;
  align-items: center;
  height: 46px;
  margin-bottom: 31px;
  font-family: var(--head-font);
  font-size: 33px;
  font-weight: 400;
  letter-spacing: 0;
  color: #fff;
  -webkit-text-stroke: 0.5px #fff;
}

.f-dash {
  width: 42px;
  height: 4px;
  margin-right: 22px;
  background: var(--green);
}

.f-title-short .f-dash {
  width: 20px;
  margin-right: 14px;
}

.f-text {
  font-size: 19px;
  line-height: 34px;
  width: 510px;
}

.f-social {
  display: flex;
  gap: 18px;
  margin-top: 37px;
  color: #fff;
}

.f-social svg {
  width: 36px;
  height: 36px;
}

.f-links {
  margin-top: -5px;
}

.f-links li {
  display: flex;
  align-items: center;
  height: 37.4px;
  font-size: 17px;
}

.f-links svg {
  width: 9px;
  height: 16px;
  margin: 0 15px 0 9px;
  color: var(--green);
}

.f-search {
  height: 78px;
  margin-top: 30px;
  padding: 0 30px 0 15px;
  border: 1px solid #333;
  display: flex;
  align-items: center;
  justify-content: space-between;
  color: #fff;
}

.f-search input {
  background: none;
  border: none;
  outline: none;
  font-family: var(--body-font);
  font-size: 19px;
  letter-spacing: 0.4px;
  width: 400px;
}

.f-search input::placeholder {
  color: #555;
}

.f-search svg {
  width: 24px;
  height: 16px;
}

.f-note {
  font-size: 17.300px;
  margin-top: 24px;
}

.f-note a {
  color: #fff;
}

.footer-bottom {
  width: 1650px;
  margin-left: -15px;
  padding: 33px 15px 0;
  border-top: 1px solid #262626;
  display: flex;
  align-items: center;
  justify-content: space-between;
}

.footer-bottom p {
  font-size: 17.300px;
  margin-top: -2px;
}

.f-logo {
  display: flex;
  align-items: center;
  gap: 16px;
  font-family: var(--head-font);
  font-size: 55px;
  letter-spacing: 0;
  color: #fff;
  -webkit-text-stroke: 0.5px #fff;
}

.f-gem {
  width: 50px;
  height: 46px;
  color: var(--green);
  margin-top: -6px;
}

.footer-bottom p a {
  color: var(--green);
}
```
